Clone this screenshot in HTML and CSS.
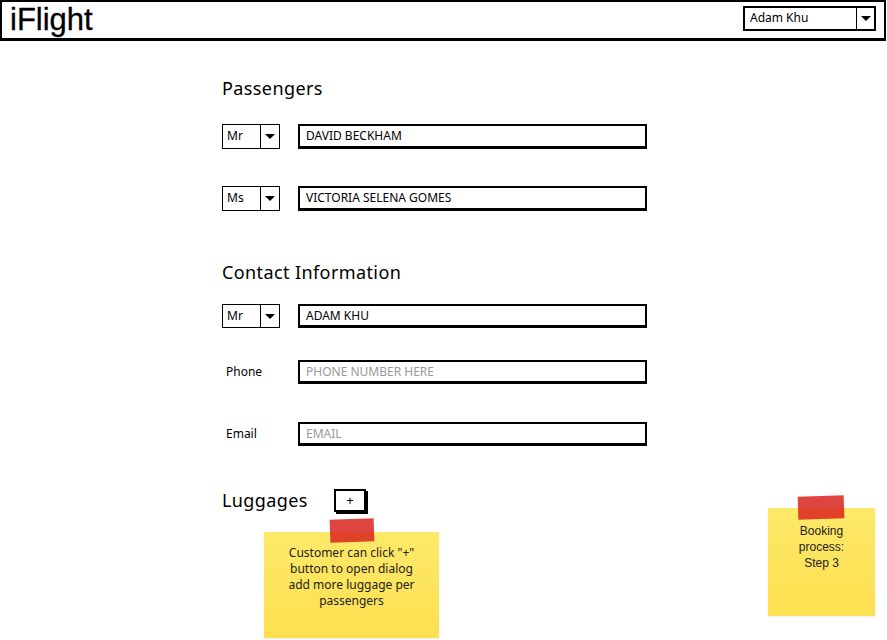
FILE: index.html
```html
<!DOCTYPE html>
<html>
<head>
<meta charset="utf-8">
<link rel="stylesheet" href="styles.css">
</head>
<body>
<header class="topbar">
  <div class="logo">iFlight</div>
  <div class="user-select">
    <span class="user-name">Adam Khu</span>
    <span class="caret-box"><span class="caret"></span></span>
  </div>
</header>

<main class="form">
  <h2 class="section-title first">Passengers</h2>
  <div class="row">
    <div class="title-select"><span class="sel-val">Mr</span><span class="caret-box"><span class="caret"></span></span></div>
    <div class="field">DAVID BECKHAM</div>
  </div>
  <div class="row gap-row">
    <div class="title-select"><span class="sel-val">Ms</span><span class="caret-box"><span class="caret"></span></span></div>
    <div class="field">VICTORIA SELENA GOMES</div>
  </div>

  <h2 class="section-title contact">Contact Information</h2>
  <div class="row">
    <div class="title-select"><span class="sel-val">Mr</span><span class="caret-box"><span class="caret"></span></span></div>
    <div class="field">ADAM KHU</div>
  </div>
  <div class="row label-row phone">
    <div class="label">Phone</div>
    <div class="field placeholder">PHONE NUMBER HERE</div>
  </div>
  <div class="row label-row email">
    <div class="label">Email</div>
    <div class="field placeholder">EMAIL</div>
  </div>

  <div class="luggage-row">
    <h2 class="section-title lug">Luggages</h2>
    <div class="plus-btn">+</div>
  </div>
</main>

<div class="note note-left">
  <div class="tape"></div>
  <p>Customer can click "+"<br>button to open dialog<br>add more luggage per<br>passengers</p>
</div>
<div class="note note-right">
  <div class="tape"></div>
  <p>Booking<br>process:<br>Step 3</p>
</div>
</body>
</html>
```

FILE: styles.css
```css
* { box-sizing: border-box; }
html, body { margin: 0; padding: 0; background: #fff; }
body {
  width: 887px;
  height: 640px;
  position: relative;
  overflow: hidden;
  font-family: "Noto Sans", "Open Sans", sans-serif;
  color: #000;
}

.topbar {
  height: 41px;
  width: 886px;
  border: 2px solid #000;
  border-bottom-width: 3px;
  display: flex;
  align-items: center;
  justify-content: space-between;
  padding: 0 8px 0 8px;
}
.logo {
  font-family: "Liberation Sans", Arial, sans-serif;
  font-size: 31px;
  line-height: 31px;
  margin-top: -1px;
  -webkit-text-stroke: 0.3px #000;
}
.user-select {
  width: 133px;
  height: 25px;
  border: 2px solid #000;
  display: flex;
  align-items: stretch;
  margin-top: -3px;
}
.user-name {
  flex: 1;
  font-size: 12px;
  line-height: 20px;
  padding-left: 5px;
}
.caret-box {
  width: 18px;
  border-left: 1.5px solid #000;
  display: flex;
  align-items: center;
  justify-content: center;
}
.caret {
  width: 0; height: 0;
  border-left: 5px solid transparent;
  border-right: 5px solid transparent;
  border-top: 5px solid #000;
}

.form {
  margin-left: 222px;
  width: 425px;
  display: flex;
  flex-direction: column;
}
.section-title {
  font-weight: normal;
  font-size: 18px;
  line-height: 22px;
  margin: 0;
  letter-spacing: 0.4px;
}
.section-title.first { margin-top: 36px; }
.section-title.contact { margin-top: 50px; }

.row {
  display: flex;
  align-items: stretch;
  height: 25px;
}
.section-title.first + .row { margin-top: 25px; }
.gap-row { margin-top: 37px; }
.section-title.contact + .row { margin-top: 21px; height: 24px; }
.phone { margin-top: 32px; height: 24px; }
.email { margin-top: 38px; height: 24px; }

.title-select {
  width: 58px;
  border: 1.5px solid #000;
  display: flex;
  margin-right: 18px;
}
.sel-val {
  flex: 1;
  font-size: 12px;
  line-height: 21px;
  padding-left: 4px;
}
.title-select .caret-box { width: 19px; }

.field {
  flex: 1;
  border: 2px solid #000;
  border-right-width: 2.5px;
  border-bottom-width: 3px;
  font-size: 12px;
  line-height: 19px;
  padding-left: 6px;
  text-transform: uppercase;
}
.field.placeholder { color: #999; }
.label {
  width: 76px;
  font-size: 12px;
  line-height: 24px;
  padding-left: 4px;
}

.luggage-row {
  display: flex;
  align-items: center;
  margin-top: 41px;
}
.section-title.lug { width: 112px; }
.plus-btn {
  width: 32px;
  height: 23px;
  border: 2px solid #000;
  box-shadow: 2px 2px 0 #000;
  font-size: 13px;
  line-height: 18px;
  text-align: center;
  margin-top: 2px;
}

.note {
  position: absolute;
  background: linear-gradient(180deg, #fee96a 0%, #fde35a 60%, #fde04f 100%);
  display: flex;
  flex-direction: column;
  align-items: center;
  box-shadow: 0 1px 2px rgba(0,0,0,0.08);
}
.note p {
  margin: 0;
  text-align: center;
  font-size: 12px;
  line-height: 16px;
  color: #222;
}
.tape {
  position: absolute;
  background: rgba(217, 36, 30, 0.85);
  transform: rotate(-2deg);
}
.note-left {
  left: 264px;
  top: 532px;
  width: 175px;
  height: 106px;
  padding-top: 13px;
}
.note-left .tape {
  left: 66px;
  top: -13px;
  width: 44px;
  height: 23px;
}
.note-right {
  left: 768px;
  top: 508px;
  width: 107px;
  height: 108px;
  padding-top: 15px;
}
.note-right p { font-family: "Liberation Sans", Arial, sans-serif; line-height: 16px; }
.note-right .tape {
  left: 30px;
  top: -12px;
  width: 46px;
  height: 23px;
}
```
